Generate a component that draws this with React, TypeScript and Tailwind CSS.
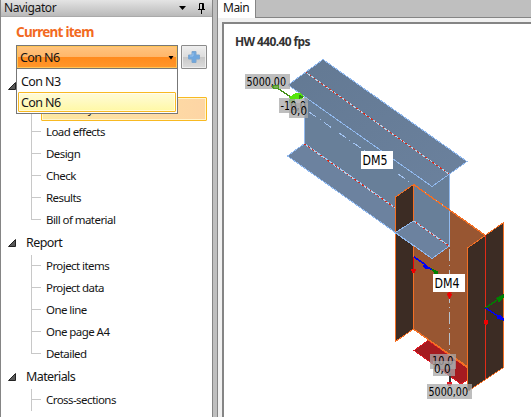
import React from "react";

const UI = "font-['Noto_Sans','Open_Sans',sans-serif]";

type GroupProps = { title: string; items: string[]; selected?: string; open?: boolean };

function Group({ title, items, selected, open }: GroupProps) {
  return (
    <section>
      <div className="flex h-6 items-center pl-[7px]">
        <svg width="8" height="8" viewBox="0 0 8 8">
          <path d="M7.5 .5V7.5H.5Z" fill="#595959" stroke="#222" />
        </svg>
        <span className="ml-[10px] text-[12.5px] leading-6 tracking-[-0.6px]">{title}</span>
      </div>
      <ul>
        {items.map((item, i) => (
          <li key={item} className={`flex ${item === selected ? "h-[23px]" : "h-[22px]"}`}>
            <div className="ml-[30px] flex w-[10px] flex-col">
              <div className="h-[11px] border-b border-l border-[#c8c8c8]" />
              <div className={`flex-1 border-[#c8c8c8] ${i < items.length - 1 || open ? "border-l" : ""}`} />
            </div>
            {item === selected ? (
              <div className="-mt-px h-6 w-[166px] rounded-[1px] border border-[#f8b922] bg-gradient-to-r from-[#fde8a0] to-[#fdd5a5] pl-1 text-[11.5px] leading-[22px] tracking-[-0.9px] ring-1 ring-inset ring-[#fff5cf]">
                {item}
              </div>
            ) : (
              <span className="ml-[5px] text-[11.5px] leading-[21px] tracking-[-0.56px] whitespace-nowrap">{item}</span>
            )}
          </li>
        ))}
      </ul>
    </section>
  );
}

type TagProps = { x: number; y: number; w: number; h: number; tx: number; ty: number; tw: number; text: string; plain?: boolean };

function Tag({ x, y, w, h, tx, ty, tw, text, plain }: TagProps) {
  return (
    <g>
      <rect x={x} y={y} width={w} height={h} fill={plain ? "#fff" : "#a8a8a8"} fillOpacity={plain ? 1 : 0.75} />
      <text x={tx} y={ty} textLength={tw} lengthAdjust="spacingAndGlyphs" fontSize={plain ? 13.5 : 12.5} fill="#000">{text}</text>
    </g>
  );
}

/* Steel joint: origin of the drawing is the viewport's inner corner (224,24). */
function Scene() {
  return (
    <svg className="block font-['DejaVu_Sans_Condensed','DejaVu_Sans',sans-serif]" width="307" height="393" viewBox="224 24 307 393" shapeRendering="crispEdges">
      <defs>
        <linearGradient id="steel" x1="0" y1="0" x2="1" y2="1">
          <stop offset="0" stopColor="#637993" />
          <stop offset="1" stopColor="#6b819d" />
        </linearGradient>
      </defs>
      {/* column web */}
      <path d="M413.5 184.5L485.5 235.5V379L413.5 329Z" fill="#985632" stroke="#f36f24" />
      {/* beam web and flanges */}
      <path d="M304.5 97L304.5 144L449.5 246V174L432 186Z" fill="#687f99" />
      <path d="M304.5 97V144M449.5 174V246" fill="none" stroke="#91b9ee" />
      <path d="M287.5 156L304.5 143.5L449.5 246L432 258.5Z" fill="#6c829f" stroke="#91b9ee" />
      <path d="M323 59.5L467 161.5L432 186.5L288 85Z" fill="url(#steel)" stroke="#91b9ee" />
      <path d="M306 72.5L449 174M304.5 144L449 246" stroke="#c4cee0" />
      <path d="M306 72.5L449 174M304.5 144L449 246" stroke="#df2615" strokeDasharray="1.8 2.9" />
      <path d="M309 112L411 183" stroke="#a4c5f3" strokeDasharray="9 4 1 4" />
      {/* column flanges */}
      <path d="M395.5 197L413.5 184.5V221L395.5 233Z" fill="#3c2c24" />
      <path d="M395.5 233L413.5 245.7V329L395.5 341.5Z" fill="#3c2c24" />
      <path d="M395.5 233V197L413.5 184.5V221M395.5 233V341.5L413.5 329V246" fill="none" stroke="#f36f24" />
      <path d="M395.5 232.5L413.5 221M395.5 233L413.5 245.7" stroke="#91b9ee" />
      <path d="M413.5 184.5L449.5 210" stroke="#f36f24" strokeWidth="1.4" />
      <path d="M425 192.5L449.5 210" stroke="#bcb4b5" strokeDasharray="1 6" />
      <path d="M449.5 249V356" stroke="#b8c1cc" strokeDasharray="12 4 1 4" />
      {/* base plate */}
      <path d="M414 350.5L428 340.5L467 367.5V380L461 384Z" fill="#a51b20" stroke="#dc1923" />
      <path d="M413.5 329L467.5 367.5M449.5 210L485.5 235.5" stroke="#f36f24" strokeWidth="1.4" />
      <path d="M467.5 248L503.5 222.5V367.5L467.5 391.5Z" fill="#3c2c24" stroke="#f36f24" />
      <path d="M485.5 235V379" stroke="#e12c18" />
      {/* local axes */}
      <path d="M414 257L426 265" stroke="#0000f5" strokeWidth="1.5" />
      <path d="M425 264L430.5 269L425 268L423.5 266Z" fill="#0000f5" stroke="#0000f5" />
      <path d="M413.5 257V270" stroke="#f00000" />
      <path d="M411 269H416L415 273H412Z" fill="#f00000" />
      <path d="M432 269L438 272L436 275Z" fill="#008000" stroke="#008000" />
      <path d="M447 294L449.5 292L452 294L449.5 299Z" fill="#f00000" stroke="#f00000" strokeWidth=".6" />
      <path d="M485.5 308L497 300" stroke="#008000" strokeWidth="1.3" />
      <path d="M496.5 298.5L503 295V298L499 301.5Z" fill="#008000" stroke="#008000" />
      <path d="M485.5 308L498 316" stroke="#0000f5" strokeWidth="1.3" />
      <path d="M499 315L503 318V320L497 318Z" fill="#0000f5" stroke="#0000f5" />
      <path d="M484 320H488L487 324H485Z" fill="#f00000" stroke="#f00000" />
      {/* load arrows */}
      <path d="M449.5 373V382" stroke="#333" strokeWidth="2" />
      <path d="M446.5 382H452.5L451 386H448Z" fill="#e01923" />
      <Tag x={245} y={74} w={45} h={15} tx={246.5} ty={85.5} tw={39.5} text="5000,00" />
      <path d="M276 87L292 98L297 107" fill="none" stroke="#459018" strokeWidth="1.3" />
      <ellipse cx="275.7" cy="87" rx="3" ry="1.8" fill="#78af55" stroke="#4b9b20" />
      <ellipse cx="292" cy="101" rx="3" ry="4" fill="#51c91c" />
      <Tag x={279} y={98} w={29} h={15} tx={280.5} ty={109.5} tw={25.5} text="-10,0" />
      <path d="M289 97L295 93.5L300 93L304 96.5L301 99.5L290 99Z" fill="#56e50f" />
      <path d="M299 94.5L304 97L299 99Z" fill="#328b13" />
      <Tag x={289} y={103} w={19} h={15} tx={290.5} ty={115} tw={16.5} text="0,0" />
      <Tag x={361} y={151} w={32} h={18} tx={362.5} ty={164.5} tw={25} text="DM5" plain />
      <Tag x={433} y={274} w={32} h={18} tx={434.5} ty={287.5} tw={25} text="DM4" plain />
      <Tag x={430} y={354} w={26} h={15} tx={432} ty={365} tw={21.5} text="10,0" />
      <Tag x={433} y={361} w={22} h={15} tx={434} ty={373} tw={16.5} text="0,0" />
      <Tag x={427} y={384} w={45} h={15} tx={428.5} ty={395.5} tw={39.5} text="5000,00" />
    </svg>
  );
}

export default function App() {
  return (
    <main className={`flex h-[417px] w-[531px] overflow-hidden bg-[#bfbfbf] text-[#151515] ${UI}`}>
      <aside className="w-[213px] shrink-0 border-x border-[#858585] bg-white">
        <header className="flex h-[17px] items-center border-b border-[#aaa] bg-gradient-to-b from-[#e4e4e4] to-[#bababa]">
          <h1 className="ml-[3px] text-[12px] leading-4 tracking-[-0.38px]">Navigator</h1>
          <svg className="ml-auto" width="7" height="4" viewBox="0 0 7 4"><path d="M0 0H7L3.5 4Z" fill="#000" /></svg>
          <svg className="mr-[7px] ml-[12px]" width="7" height="11" viewBox="0 0 7 11">
            <path d="M1.5 6V.5H5.5V6M0 6.5H7M3.5 7V11" fill="none" stroke="#000" /><path d="M4 1H5V6H4Z" />
          </svg>
        </header>
        <h2 className="flex h-7 items-center pt-[3px] pl-[15px] text-[13.5px] font-bold tracking-[-0.75px] text-[#f26a21]">Current item</h2>
        <div className="relative ml-[15px] flex h-6 gap-[3px]">
          <button className="flex w-[162px] items-center border border-[#777] bg-[linear-gradient(180deg,#ffc580_0%,#ffb669_49%,#ff8a1c_50%,#ff972c_100%)] pt-[2px] pr-[3px] pl-[3px] text-left text-[12.5px] tracking-[-0.6px] ring-1 ring-inset ring-[#ffc457]">
            Con N6
            <svg className="ml-auto" width="6" height="4" viewBox="0 0 6 4"><path d="M.5 0H5.5L3 3.5Z" fill="#000" /></svg>
          </button>
          <button className="flex w-[26px] items-center justify-center rounded-[1px] border border-[#8b8b8b] bg-[linear-gradient(180deg,#eee_0%,#ddd_49%,#c7c7c7_50%,#dcdcdc_100%)] ring-1 ring-inset ring-[#eee]">
            <svg width="12" height="12" viewBox="0 0 12 12"><path d="M4 .5H8V4H11.5V8H8V11.5H4V8H.5V4H4Z" fill="#6fa7df" stroke="#7da6cf" /><path d="M5 2V5H2" fill="none" stroke="#98c4ef" /></svg>
          </button>
          <div className="absolute top-6 left-0 z-10 h-[45px] w-[162px] border border-t-0 border-[#777] bg-white text-[12.5px] tracking-[-0.6px]">
            <div className="h-[23px] pl-1 leading-[25px]">Con N3</div>
            <div className="mx-px h-[20px] rounded-[1px] border border-[#f8b922] bg-gradient-to-b from-[#fffbd8] to-[#fff8a5] pl-[2px] leading-[19px] ring-1 ring-inset ring-white/60">Con N6</div>
          </div>
        </div>
        <nav className="pt-[5px]">
          <Group title="Connection" items={["Geometry", "Load effects", "Design", "Check", "Results", "Bill of material"]} selected="Geometry" />
          <Group title="Report" items={["Project items", "Project data", "One line", "One page A4", "Detailed"]} />
          <Group title="Materials" items={["Cross-sections"]} open />
        </nav>
      </aside>
      <section className="ml-1 flex min-w-0 flex-1 flex-col border-l border-[#858585]">
        <div className="flex h-[18px] shrink-0">
          <div className="w-[38px] border-r border-[#858585] bg-white pl-[5px] text-[12px] leading-[15px] tracking-[-0.5px]">Main</div>
          <div className="flex-1 border-b border-[#858585]" />
        </div>
        <div className="flex min-h-0 flex-1 bg-[#f0f0f0] pt-1 pl-1">
          <div className="relative flex-1 overflow-hidden border-t-2 border-l-2 border-[#858585] bg-white">
            <Scene />
            <p className="absolute top-[9px] left-[11px] text-[12px] leading-[18px] font-bold tracking-[-0.62px] whitespace-nowrap text-[#333]">HW 440.40 fps</p>
          </div>
        </div>
      </section>
    </main>
  );
}
